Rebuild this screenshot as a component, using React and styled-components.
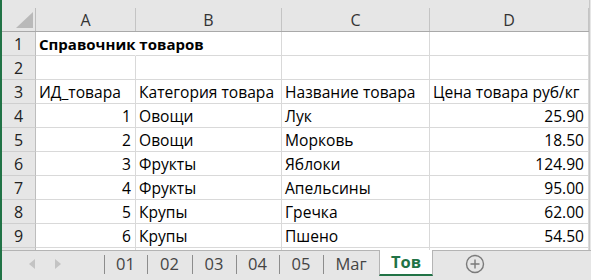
import React from 'react';
import styled, { createGlobalStyle } from 'styled-components';

const GlobalStyle = createGlobalStyle`
  html, body {
    margin: 0;
    padding: 0;
    background: #e6e6e6;
    overflow: hidden;
  }
`;

const COLS = '34px 100px 146px 148px 159px';
const FONT = `"Open Sans", "Noto Sans", "Liberation Sans", sans-serif`;

// last row only peeks out under row 9, so it carries no label
const rows = [
  ['Справочник товаров', '', '', ''],
  ['', '', '', ''],
  ['ИД_товара', 'Категория товара', 'Название товара', 'Цена товара руб/кг'],
  ['1', 'Овощи', 'Лук', '25.90'],
  ['2', 'Овощи', 'Морковь', '18.50'],
  ['3', 'Фрукты', 'Яблоки', '124.90'],
  ['4', 'Фрукты', 'Апельсины', '95.00'],
  ['5', 'Крупы', 'Гречка', '62.00'],
  ['6', 'Крупы', 'Пшено', '54.50'],
  ['', '', '', ''],
];

const tabs = [
  { name: '01', width: 43 },
  { name: '02', width: 45 },
  { name: '03', width: 44 },
  { name: '04', width: 43 },
  { name: '05', width: 44 },
  { name: 'Маг', width: 56 },
];

const Frame = styled.div`
  width: 591px;
  height: 280px;
  display: flex;
  flex-direction: column;
  border-left: 2px solid #217346;
  box-sizing: border-box;
  font-family: ${FONT};
  background: #e6e6e6;
`;

const Sheet = styled.div`
  flex: 1;
  overflow: hidden;
  width: 587px;
  background: #fff;
  border-right: 1px solid #c8c8c8;
`;

const HeaderRow = styled.div`
  display: grid;
  grid-template-columns: ${COLS};
  padding-top: 8px;
  background: #e6e6e6;
  border-bottom: 1px solid #a9a9a9;
`;

const Corner = styled.div`
  position: relative;
  height: 23px;
  border-right: 1px solid #bdbdbd;
  box-sizing: border-box;
`;

const CornerMark = styled.svg`
  position: absolute;
  right: 2px;
  bottom: 3px;
`;

const ColHead = styled.div`
  height: 23px;
  display: flex;
  align-items: center;
  justify-content: center;
  font-size: 16px;
  color: #333;
  border-right: 1px solid #c4c4c4;
  box-sizing: border-box;
`;

const Row = styled.div`
  display: grid;
  grid-template-columns: ${COLS};
  height: 24px;
`;

const RowHead = styled.div`
  display: flex;
  align-items: center;
  justify-content: center;
  background: #e6e6e6;
  font-size: 16px;
  color: #222;
  border-right: 1px solid #bdbdbd;
  border-bottom: 1px solid #cfcfcf;
  box-sizing: border-box;
`;

const Cell = styled.div`
  display: flex;
  align-items: center;
  justify-content: ${(p) => (p.$num ? 'flex-end' : 'flex-start')};
  padding: 1px 4px 0 3px;
  font-size: ${(p) => (p.$bold ? 15 : 15.6)}px;
  font-weight: ${(p) => (p.$bold ? 700 : 400)};
  color: #000;
  white-space: nowrap;
  overflow: visible;
  border-right: 1px solid ${(p) => (p.$spill ? 'transparent' : '#d9d9d9')};
  border-bottom: 1px solid #d9d9d9;
  box-sizing: border-box;
  min-width: 0;
`;

const TabBar = styled.div`
  height: 30px;
  flex-shrink: 0;
  display: flex;
  align-items: stretch;
  border-top: 1px solid #b4b4b4;
  box-sizing: border-box;
  background: #e6e6e6;
`;

const Nav = styled.div`
  width: 102px;
  display: flex;
  align-items: center;
  gap: 20px;
  padding: 0 0 3px 27px;
  box-sizing: border-box;
`;

const Tab = styled.div`
  position: relative;
  width: ${(p) => p.$w}px;
  display: flex;
  align-items: center;
  justify-content: center;
  padding-bottom: 5px;
  box-sizing: border-box;
  font-size: 16.5px;
  color: #444;
  &::before {
    content: '';
    position: absolute;
    left: 0;
    top: 4px;
    height: 19px;
    border-left: 1px solid #8c8c8c;
  }
`;

const ActiveTab = styled.div`
  width: 54px;
  height: 26px;
  margin-top: -1px;
  display: flex;
  align-items: center;
  justify-content: center;
  padding-bottom: 1px;
  background: #fff;
  border-left: 1px solid #b4b4b4;
  border-right: 1px solid #b4b4b4;
  border-bottom: 2px solid #217346;
  box-sizing: border-box;
  font-size: 16.5px;
  font-weight: 700;
  color: #217346;
`;

const AddButton = styled.div`
  margin-left: 32px;
  display: flex;
  align-items: center;
  padding-bottom: 3px;
`;

const Arrow = ({ dir }) => (
  <svg width="6" height="10" viewBox="0 0 6 10">
    <path d={dir === 'left' ? 'M6 0 L0 5 L6 10 Z' : 'M0 0 L6 5 L0 10 Z'} fill="#c3c3c3" />
  </svg>
);

export default function App() {
  return (
    <>
      <GlobalStyle />
      <Frame>
        <Sheet>
          <HeaderRow>
            <Corner>
              <CornerMark width="17" height="16" viewBox="0 0 17 16">
                <path d="M17 0 L17 16 L0 16 Z" fill="#b9b9b9" />
              </CornerMark>
            </Corner>
            {['A', 'B', 'C', 'D'].map((c) => (
              <ColHead key={c}>{c}</ColHead>
            ))}
          </HeaderRow>
          {rows.map((r, i) => (
            <Row key={i}>
              <RowHead>{i < rows.length - 1 ? i + 1 : ''}</RowHead>
              {r.map((v, j) => {
                const num = i >= 3 && (j === 0 || j === 3);
                return (
                  <Cell key={j} $num={num} $bold={i === 0} $spill={i === 0 && j === 0}>
                    {v}
                  </Cell>
                );
              })}
            </Row>
          ))}
        </Sheet>
        <TabBar>
          <Nav>
            <Arrow dir="left" />
            <Arrow dir="right" />
          </Nav>
          {tabs.map((t) => (
            <Tab key={t.name} $w={t.width}>{t.name}</Tab>
          ))}
          <ActiveTab>Тов</ActiveTab>
          <AddButton>
            <svg width="20" height="20" viewBox="0 0 20 20">
              <circle cx="10" cy="10" r="8.5" fill="none" stroke="#7a7a7a" strokeWidth="1.4" />
              <path d="M10 5.5 V14.5 M5.5 10 H14.5" stroke="#7a7a7a" strokeWidth="1.4" />
            </svg>
          </AddButton>
        </TabBar>
      </Frame>
    </>
  );
}
